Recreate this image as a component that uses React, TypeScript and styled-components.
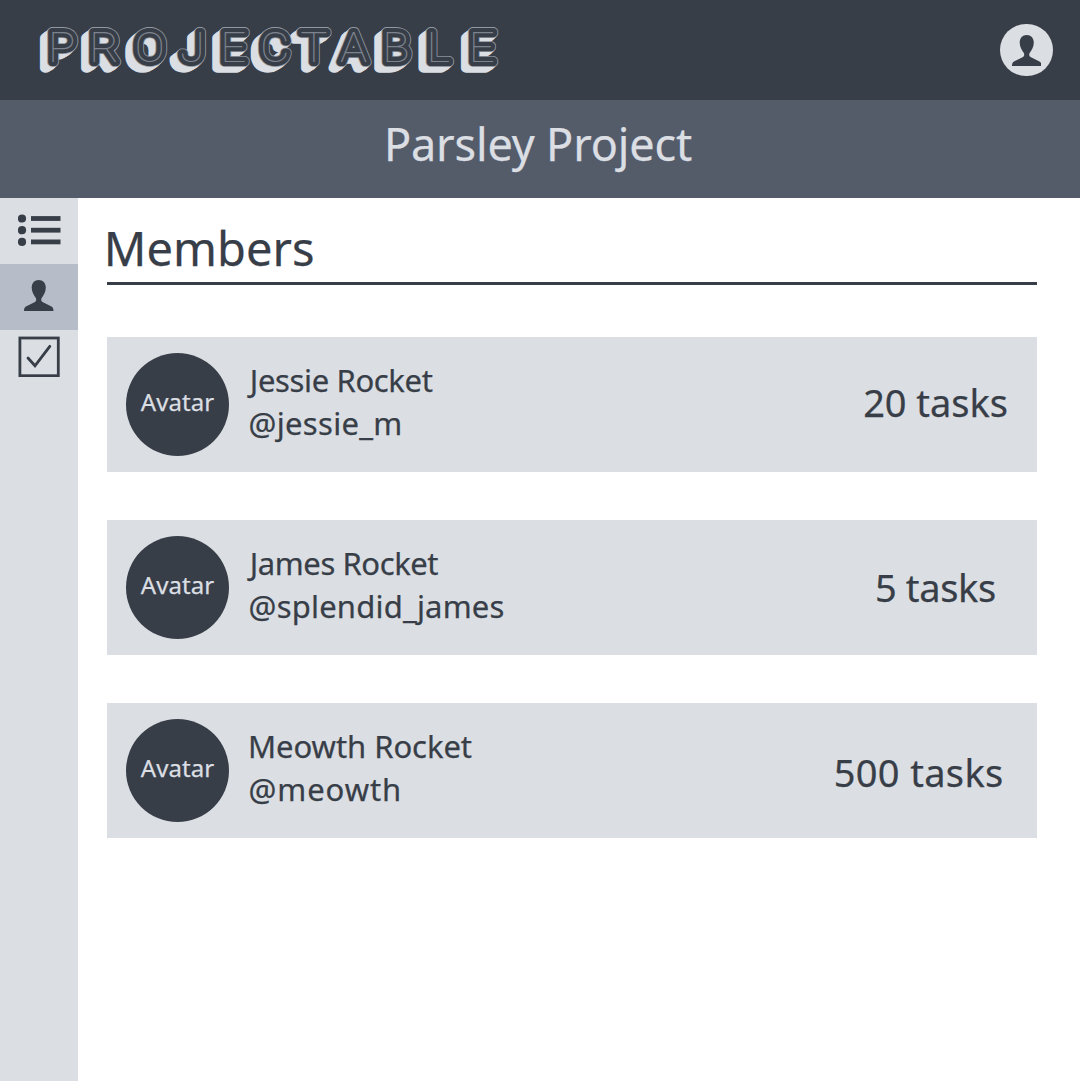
import React from "react";
import styled, { createGlobalStyle } from "styled-components";

const ink = "#383e48";
const slate = "#545c6a";
const mist = "#dbdee3";
const active = "#b6bdc8";

const GlobalStyle = createGlobalStyle`
  * { box-sizing: border-box; }
  body { margin: 0; background: #fff; }
  h1, h2, p, ul { margin: 0; padding: 0; font-weight: 400; list-style: none; }
`;

const Page = styled.div`
  display: flex;
  flex-direction: column;
  height: 1081px;
  color: ${ink};
  font-family: "Noto Sans", "Open Sans", sans-serif;
  -webkit-text-stroke: 0.25px currentColor;
  overflow: hidden;
`;

const Header = styled.header`
  display: flex;
  align-items: center;
  justify-content: space-between;
  height: 100px;
  padding: 0 27px 0 30px;
  background: ${ink};
`;

const Logo = styled.svg`
  display: block;
  width: 480px;
  height: 70px;
  font-family: Roboto, sans-serif;
  font-weight: 100;
  font-size: 43px;
  stroke-linejoin: round;
  stroke-linecap: round;
  -webkit-text-stroke: 0;
`;

const ProfileButton = styled.button`
  display: grid;
  place-items: center;
  width: 52.6px;
  height: 52.6px;
  padding: 0;
  border: 0;
  border-radius: 50%;
  background: ${mist};
`;

const ProjectBar = styled.div`
  display: flex;
  align-items: center;
  justify-content: center;
  flex: none;
  height: 97.5px;
  padding: 0 4px 10px 0;
  background: ${slate};
`;

const ProjectName = styled.h1`
  color: ${mist};
  font-size: 45px;
  line-height: 60px;
  letter-spacing: -0.15px;
`;

const Body = styled.div`
  display: flex;
  flex: 1;
`;

const Sidebar = styled.nav`
  display: flex;
  flex-direction: column;
  width: 78.4px;
  background: ${mist};
`;

const NavItem = styled.a<{ $height: number; $lift: number; $active?: boolean }>`
  display: flex;
  align-items: center;
  justify-content: center;
  height: ${(p) => p.$height}px;
  padding-bottom: ${(p) => p.$lift}px;
  background: ${(p) => (p.$active ? active : "transparent")};
`;

const Glyph = styled.svg`
  display: block;
  fill: ${ink};
`;

const Main = styled.main`
  flex: 1;
  padding: 20px 42.7px 0 29px;
`;

const Heading = styled.h2`
  height: 67px;
  margin-bottom: 52.6px;
  border-bottom: 3px solid ${ink};
  font-size: 47px;
  line-height: 60px;
  letter-spacing: 0.05px;
  text-indent: -3.6px;
`;

const MemberList = styled.ul`
  display: flex;
  flex-direction: column;
  gap: 48.5px;
`;

const MemberCard = styled.li`
  display: flex;
  align-items: center;
  height: 134.5px;
  padding-left: 18.7px;
  background: ${mist};
`;

const Avatar = styled.div`
  display: grid;
  place-items: center;
  width: 103px;
  height: 103px;
  padding-bottom: 5px;
  border-radius: 50%;
  background: ${ink};
  color: ${mist};
  font-size: 24px;
  letter-spacing: 0.1px;
`;

const Identity = styled.div`
  flex: 1;
  padding: 0 0 4px 19.5px;
`;

const Line = styled.p<{ $tracking: number }>`
  font-size: 31px;
  line-height: 43px;
  letter-spacing: ${(p) => p.$tracking}px;
`;

const NameLine = styled(Line)<{ $indent: number }>`
  text-indent: ${(p) => p.$indent}px;
`;

const TaskCount = styled.p<{ $right: number; $shift: number; $tracking: number }>`
  margin: ${(p) => p.$shift}px ${(p) => p.$right}px 0 0;
  font-size: 38px;
  line-height: 50px;
  letter-spacing: ${(p) => p.$tracking}px;
`;

const extrusion = [7.4, 6, 5, 4, 3, 2, 1];

function Wordmark() {
  return (
    <Logo viewBox="30 15 480 70" role="img" aria-label="Projectable">
      {extrusion.map((n) => (
        <use
          key={n}
          href="#word"
          x={-n}
          y={n * 0.85}
          fill={mist}
          stroke={mist}
          strokeWidth="9.4"
        />
      ))}
      <use href="#word" fill="#9298a1" stroke="#9298a1" strokeWidth="9.8" />
      <use href="#word" fill={ink} stroke={ink} strokeWidth="8.2" />
      <g fill="#7d838e">
        <text
          id="word"
          transform="scale(1.06 1)"
          x="45.2 84.2 127 169.700 207.700 245.200 283.300 320.800 360.500 402.300 442.300"
          y="62.2"
        >
          PROJECTABLE
        </text>
      </g>
    </Logo>
  );
}

function PersonIcon() {
  return (
    <Glyph width="29.5" height="31" viewBox="0 0 29.5 31">
      <path d="M14.7 0C19 0 21.8 3 21.8 7.5c0 4.500-2.300 8-4.300 10.800-.5 1.700-.3 3 1 3.700l8.500 4.300c1.800.9 2.500 2 2.500 4.700H0c0-2.700.6-3.800 2.400-4.700L11 22c1.200-.7 1.400-2 1-3.700C10 15.500 7.700 12 7.700 7.500 7.700 3 10.500 0 14.700 0Z" />
    </Glyph>
  );
}

function ListIcon() {
  return (
    <Glyph width="43" height="32" viewBox="0 0 43 32">
      {[4.5, 16.2, 27.9].map((y) => (
        <g key={y}>
          <circle cx="4" cy={y} r="4.1" />
          <rect x="13" y={y - 2.4} width="29.5" height="4.8" />
        </g>
      ))}
    </Glyph>
  );
}

function CheckIcon() {
  return (
    <Glyph width="42" height="41" viewBox="0 0 42 41">
      <g fill="none" stroke={ink} strokeWidth="2.8">
        <rect x="1.9" y="2" width="38.4" height="37.7" />
        <path d="M10 22l7 7.8L31.8 10.3" strokeLinecap="round" />
      </g>
    </Glyph>
  );
}

const members = [
  {
    name: "Jessie Rocket", nameTracking: -0.35, indent: 1.2,
    handle: "@jessie_m", handleTracking: 0.3,
    tasks: "20 tasks", tracking: -0.05, right: 29.5, shift: -4,
  },
  {
    name: "James Rocket", nameTracking: -0.42, indent: 1.2,
    handle: "@splendid_james", handleTracking: 0.2,
    tasks: "5 tasks", tracking: -0.35, right: 41.5, shift: 0,
  },
  {
    name: "Meowth Rocket", nameTracking: -0.05, indent: -0.6,
    handle: "@meowth", handleTracking: 0.9,
    tasks: "500 tasks", tracking: 0.35, right: 33.7, shift: 4,
  },
];

export default function App() {
  return (
    <Page>
      <GlobalStyle />
      <Header>
        <Wordmark />
        <ProfileButton aria-label="Profile">
          <PersonIcon />
        </ProfileButton>
      </Header>
      <ProjectBar>
        <ProjectName>Parsley Project</ProjectName>
      </ProjectBar>
      <Body>
        <Sidebar>
          <NavItem $height={66.5} $lift={1.5}><ListIcon /></NavItem>
          <NavItem $height={65.5} $lift={3} $active><PersonIcon /></NavItem>
          <NavItem $height={55} $lift={0.5}><CheckIcon /></NavItem>
        </Sidebar>
        <Main>
          <Heading>Members</Heading>
          <MemberList>
            {members.map((m) => (
              <MemberCard key={m.handle}>
                <Avatar>Avatar</Avatar>
                <Identity>
                  <NameLine $tracking={m.nameTracking} $indent={m.indent}>{m.name}</NameLine>
                  <Line $tracking={m.handleTracking}>{m.handle}</Line>
                </Identity>
                <TaskCount $right={m.right} $shift={m.shift} $tracking={m.tracking}>
                  {m.tasks}
                </TaskCount>
              </MemberCard>
            ))}
          </MemberList>
        </Main>
      </Body>
    </Page>
  );
}
